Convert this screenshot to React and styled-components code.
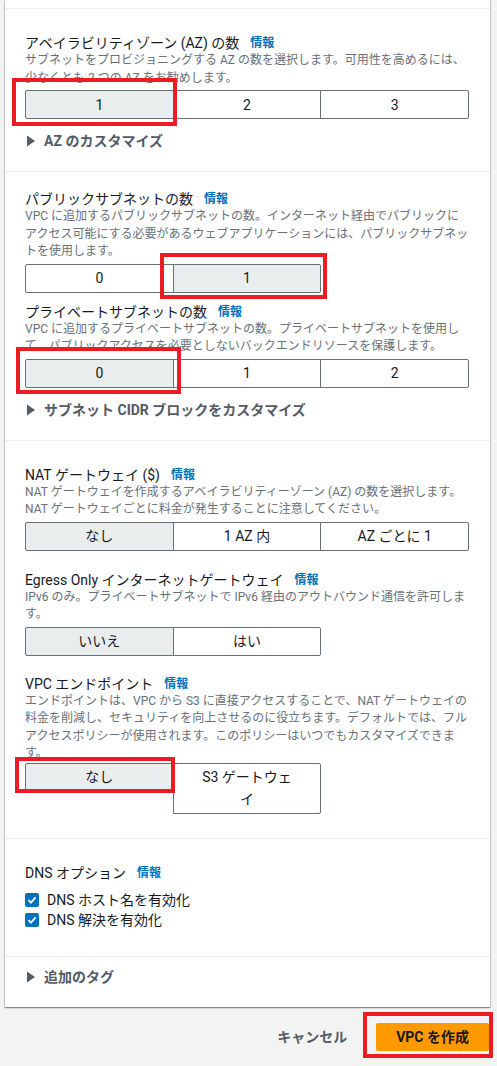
import React from "react";
import styled, { createGlobalStyle } from "styled-components";

const GlobalStyle = createGlobalStyle`
  body {
    margin: 0;
    background: #f2f3f3;
    font-family: Roboto, "Noto Sans CJK JP", "Noto Sans", sans-serif;
    color: #16191f;
  }
`;

const Page = styled.div`
  width: 497px;
  height: 1066px;
  overflow: hidden;
`;

const Card = styled.div`
  margin-left: 5px;
  width: 485px;
  background: #fff;
  box-shadow: 0 1px 1px 0 rgba(0, 28, 36, 0.3),
    1px 1px 1px 0 rgba(0, 28, 36, 0.15), -1px 1px 1px 0 rgba(0, 28, 36, 0.15);
`;

const Section = styled.section`
  border-top: ${(p) => (p.$first ? "none" : "1px solid #eaeded")};
  padding: ${(p) => p.$pt}px 20px ${(p) => p.$pb}px;
`;

const Title = styled.div`
  display: flex;
  align-items: center;
  margin-top: ${(p) => p.$mt || 0}px;
  font-size: 14px;
  line-height: 18px;
  color: #16191f;
`;

const Info = styled.a`
  margin-left: 11px;
  font-size: 12px;
  font-weight: 700;
  color: #0073bb;
  text-decoration: none;
`;

const Desc = styled.div`
  font-size: 12px;
  line-height: 17.5px;
  color: #687078;
`;

const Line = styled.span`
  display: block;
  white-space: nowrap;
`;

const Segments = styled.div`
  display: flex;
  align-items: flex-start;
  margin-top: ${(p) => p.$mt}px;
`;

const Segment = styled.button`
  position: relative;
  flex: 0 0 148.7px;
  margin: 0 0 0 -1px;
  padding: 2.5px 20px;
  border: 1px solid #687078;
  background: ${(p) => (p.$selected ? "#eaeded" : "#fff")};
  font: inherit;
  font-size: 14px;
  line-height: 22px;
  color: #16191f;
  text-align: center;

  &:first-child {
    margin-left: 0;
    border-radius: 2px 0 0 2px;
  }
  &:last-child {
    border-radius: 0 2px 2px 0;
  }
`;

const Highlight = styled.span`
  position: absolute;
  top: ${(p) => p.$t}px;
  left: ${(p) => p.$l}px;
  right: ${(p) => p.$r}px;
  bottom: ${(p) => p.$b}px;
  border: 4px solid #ed1c24;
  pointer-events: none;
  z-index: 2;
`;

const Toggle = styled.div`
  display: flex;
  align-items: center;
  margin-top: 12px;
  font-size: 14px;
  line-height: 20px;
  font-weight: 700;
  color: #545b64;

  svg {
    margin-right: 3px;
  }
`;

const Checks = styled.div`
  margin-top: 8px;
`;

const CheckRow = styled.label`
  display: flex;
  align-items: center;
  font-size: 14px;
  line-height: 20px;
  color: #16191f;
`;

const Box = styled.span`
  display: inline-flex;
  align-items: center;
  justify-content: center;
  width: 14px;
  height: 14px;
  margin-right: 8px;
  border-radius: 2px;
  background: #0073bb;
`;

const Footer = styled.div`
  display: flex;
  justify-content: flex-end;
  align-items: center;
  gap: 9px;
  margin-top: 16px;
  padding-right: 8px;
`;

const LinkButton = styled.button`
  padding: 4px 20px;
  border: none;
  background: none;
  font: inherit;
  font-size: 14px;
  line-height: 20px;
  font-weight: 700;
  color: #545b64;
`;

const Primary = styled.button`
  position: relative;
  padding: 4px 20px;
  border: none;
  border-radius: 2px;
  background: #ff9900;
  font: inherit;
  font-size: 14px;
  line-height: 20px;
  font-weight: 700;
  color: #16191f;
`;

const Caret = () => (
  <svg width="16" height="16" viewBox="0 0 16 16">
    <path d="M2 2.5 L10 8 L2 13.5 Z" fill="#545b64" />
  </svg>
);

const Check = ({ label }) => (
  <CheckRow>
    <Box>
      <svg width="10" height="10" viewBox="0 0 10 10">
        <path
          d="M1.5 5.2 L4 7.6 L8.6 2.4"
          stroke="#fff"
          strokeWidth="1.8"
          fill="none"
        />
      </svg>
    </Box>
    {label}
  </CheckRow>
);

const Field = ({ title, lines, options, selected, mark, mt, segMt = 3 }) => (
  <>
    <Title $mt={mt}>
      {title}
      <Info href="#">情報</Info>
    </Title>
    <Desc>
      {lines.map((l) => (
        <Line key={l}>{l}</Line>
      ))}
    </Desc>
    <Segments $mt={segMt}>
      {options.map((o, i) => (
        <Segment key={i} $selected={i === selected}>
          {o}
          {mark && i === selected && (
            <Highlight $t={mark[0]} $l={mark[1]} $r={mark[2]} $b={mark[3]} />
          )}
        </Segment>
      ))}
    </Segments>
  </>
);

export default function App() {
  return (
    <Page>
      <GlobalStyle />
      <Card>
        <Section $first $pt={8} $pb={0} />

        <Section $pt={25} $pb={20}>
          <Field
            title="アベイラビリティゾーン (AZ) の数"
            lines={[
              "サブネットをプロビジョニングする AZ の数を選択します。可用性を高めるには、",
              "少なくとも 2 つの AZ をお勧めします。",
            ]}
            options={["1", "2", "3"]}
            selected={0}
            mark={[-13, -14, -4, -8]}
          />
          <Toggle>
            <Caret />
            AZ のカスタマイズ
          </Toggle>
        </Section>

        <Section $pt={18} $pb={20}>
          <Field
            title="パブリックサブネットの数"
            lines={[
              "VPC に追加するパブリックサブネットの数。インターネット経由でパブリックに",
              "アクセス可能にする必要があるウェブアプリケーションには、パブリックサブネッ",
              "トを使用します。",
            ]}
            options={["0", "1"]}
            selected={1}
            mark={[-12, -14, -7, -7]}
          />
          <Field
            mt={10}
            title="プライベートサブネットの数"
            lines={[
              "VPC に追加するプライベートサブネットの数。プライベートサブネットを使用し",
              "て、パブリックアクセスを必要としないバックエンドリソースを保護します。",
            ]}
            options={["0", "1", "2"]}
            selected={0}
            mark={[-13, -10, -8, -7]}
          />
          <Toggle>
            <Caret />
            サブネット CIDR ブロックをカスタマイズ
          </Toggle>
        </Section>

        <Section $pt={25} $pb={24}>
          <Field
            title="NAT ゲートウェイ ($)"
            lines={[
              "NAT ゲートウェイを作成するアベイラビリティーゾーン (AZ) の数を選択します。",
              "NAT ゲートウェイごとに料金が発生することに注意してください。",
            ]}
            options={["なし", "1 AZ 内", "AZ ごとに 1"]}
            selected={0}
          />
          <Field
            mt={20}
            title="Egress Only インターネットゲートウェイ"
            lines={[
              "IPv6 のみ。プライベートサブネットで IPv6 経由のアウトバウンド通信を許可しま",
              "す。",
            ]}
            options={["いいえ", "はい"]}
            selected={0}
          />
          <Field
            mt={19}
            segMt={0}
            title="VPC エンドポイント"
            lines={[
              "エンドポイントは、VPC から S3 に直接アクセスすることで、NAT ゲートウェイの",
              "料金を削減し、セキュリティを向上させるのに役立ちます。デフォルトでは、フル",
              "アクセスポリシーが使用されます。このポリシーはいつでもカスタマイズできま",
              "す。",
            ]}
            options={[
              "なし",
              <>
                S3 ゲートウェ
                <br />イ
              </>,
            ]}
            selected={0}
            mark={[-7, -11, -2, -2]}
          />
        </Section>

        <Section $pt={25} $pb={26}>
          <Title>
            DNS オプション
            <Info href="#">情報</Info>
          </Title>
          <Checks>
            <Check label="DNS ホスト名を有効化" />
            <Check label="DNS 解決を有効化" />
          </Checks>
        </Section>

        <Section $pt={10} $pb={20}>
          <Toggle style={{ marginTop: 0 }}>
            <Caret />
            追加のタグ
          </Toggle>
        </Section>
      </Card>

      <Footer>
        <LinkButton>キャンセル</LinkButton>
        <Primary>
          VPC を作成
          <Highlight $t={-11} $l={-13} $r={-4} $b={-7} />
        </Primary>
      </Footer>
    </Page>
  );
}
